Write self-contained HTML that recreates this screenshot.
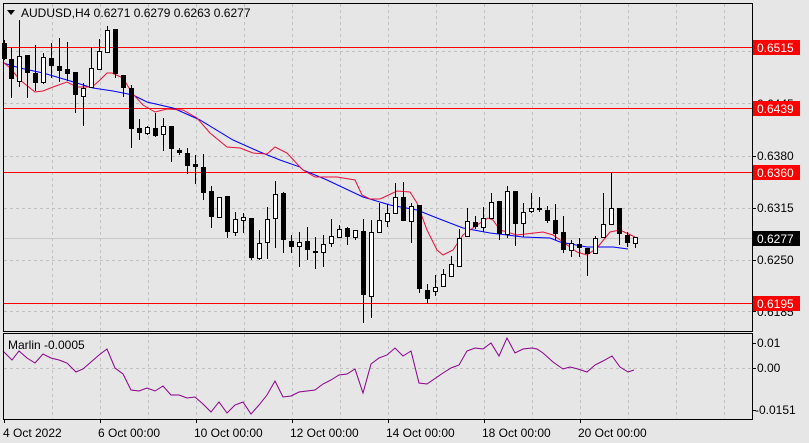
<!DOCTYPE html>
<html><head><meta charset="utf-8"><style>
html,body{margin:0;padding:0;background:#e6e6e6;}
svg{display:block;font-family:"Liberation Sans","DejaVu Sans",sans-serif;}
</style></head><body>
<svg width="809" height="443" viewBox="0 0 809 443" xmlns="http://www.w3.org/2000/svg">
<rect width="809" height="443" fill="#e6e6e6"/>
<g stroke="#c0c0c0" stroke-width="1" stroke-dasharray="3,3" fill="none">
<path d="M52.5 4V331M100.5 4V331M148.5 4V331M196.5 4V331M244.5 4V331M292.5 4V331M340.5 4V331M388.5 4V331M436.5 4V331M484.5 4V331M532.5 4V331M580.5 4V331M628.5 4V331M676.5 4V331M724.5 4V331"/>
<path d="M52.5 334V419M100.5 334V419M148.5 334V419M196.5 334V419M244.5 334V419M292.5 334V419M340.5 334V419M388.5 334V419M436.5 334V419M484.5 334V419M532.5 334V419M580.5 334V419M628.5 334V419M676.5 334V419M724.5 334V419"/>
<path d="M4 51.5H752M4 103.5H752M4 156.5H752M4 208.5H752M4 260.5H752M4 311.5H752M4 368.5H752"/>
</g>
<path d="M4 238.5H752" stroke="#c8c8c8" stroke-width="1"/>
<g stroke="#ff0000" stroke-width="1">
<path d="M4 47.5H752M4 108.5H752M4 172.5H752M4 303.5H752"/>
</g>
<!-- moving averages -->
<polyline fill="none" stroke="#0000ff" stroke-width="1" points="3,63 20,68 43,73 67,80 93,88 113,91 133,95 147,102 173,108 200,120 233,140 260,152 280,160 300,167 303,170 327,180 363,197 390,205 417,210 437,218 463,228 490,233 523,237 550,238 560,242 587,247 613,247 628,249"/>
<polyline fill="none" stroke="#e8103a" stroke-width="1" points="3,62 10,68 20,80 35,92 43,91 53,87 67,82 77,87 92,87 100,80 107,73 112,73 123,78 132,93 143,105 155,112 167,109 183,110 197,118 210,133 227,147 240,148 253,153 267,154 275,147 287,153 300,167 303,170 315,177 337,177 355,180 362,195 370,199 380,199 397,191 410,192 417,203 427,230 437,250 443,255 453,250 463,235 477,225 488,218 493,220 500,230 517,235 543,232 553,235 563,242 577,252 587,255 597,248 610,232 620,230 635,237"/>
<!-- wicks -->
<path stroke="#000" stroke-width="1" fill="none" d="M4.5 40V60M11.5 48V98M19.5 20V87M27.5 55V98M35.5 45V91M43.5 53V84M51.5 43V78M59.5 38V82M67.5 42V81M75.5 72V113M83.5 83V126M91.5 47V88M99.5 39V70M107.5 26V52M115.5 29V78M123.5 75V97M131.5 85V148M139.5 119V140M147.5 126V135M155.5 113V137M163.5 118V151M171.5 126V162M179.5 148V155M187.5 148V174M195.5 155V184M203.5 154V200M211.5 186V228M219.5 197V217M227.5 196V238M235.5 212V236M243.5 213V233M251.5 218V260M259.5 230V260M267.5 207V259M275.5 181V248M283.5 192V253M291.5 235V253M299.5 232V267M307.5 227V260M315.5 237V269M323.5 235V267M331.5 219V247M339.5 225V237M347.5 227V245M355.5 230V240M363.5 219V323M371.5 220V318M379.5 203V232M387.5 204V227M395.5 183V214M403.5 182V221M411.5 203V243M419.5 205V293M427.5 284V303M435.5 275V296M443.5 269V286M451.5 256V276M459.5 229V267M467.5 208V236M475.5 216V229M483.5 207V232M491.5 193V218M499.5 201V240M507.5 186V238M515.5 191V246M523.5 203V237M531.5 193V213M539.5 197V212M547.5 206V223M555.5 204V240M563.5 216V253M571.5 240V257M579.5 238V257M587.5 248V276M595.5 236V253M603.5 193V238M611.5 173V225M619.5 208V245M627.5 232V247M635.5 237V248"/>
<!-- black bodies -->
<g fill="#000">
<rect x="2" y="43" width="5" height="16"/><rect x="9" y="59" width="5" height="20"/><rect x="25" y="55" width="5" height="18"/><rect x="33" y="73" width="5" height="10"/><rect x="49" y="58" width="5" height="8"/><rect x="57" y="66" width="5" height="5"/><rect x="65" y="69" width="5" height="5"/><rect x="73" y="72" width="5" height="23"/><rect x="113" y="29" width="5" height="45"/><rect x="121" y="75" width="5" height="13"/><rect x="129" y="88" width="5" height="41"/><rect x="137" y="128" width="5" height="5"/><rect x="153" y="128" width="5" height="8"/><rect x="169" y="126" width="5" height="23"/><rect x="177" y="150" width="5" height="3"/><rect x="185" y="153" width="5" height="13"/><rect x="193" y="164" width="5" height="3"/><rect x="201" y="167" width="5" height="26"/><rect x="209" y="191" width="5" height="26"/><rect x="225" y="196" width="5" height="36"/><rect x="249" y="218" width="5" height="40"/><rect x="281" y="193" width="5" height="47"/><rect x="289" y="241" width="5" height="6"/><rect x="305" y="241" width="5" height="9"/><rect x="313" y="251" width="5" height="2"/><rect x="345" y="228" width="5" height="9"/><rect x="361" y="231" width="5" height="64"/><rect x="401" y="197" width="5" height="24"/><rect x="417" y="205" width="5" height="84"/><rect x="425" y="290" width="5" height="9"/><rect x="473" y="222" width="5" height="5"/><rect x="497" y="201" width="5" height="33"/><rect x="513" y="191" width="5" height="33"/><rect x="537" y="208" width="5" height="2"/><rect x="545" y="210" width="5" height="11"/><rect x="553" y="220" width="5" height="14"/><rect x="561" y="232" width="5" height="18"/><rect x="577" y="244" width="5" height="4"/><rect x="585" y="248" width="5" height="6"/><rect x="617" y="208" width="5" height="26"/><rect x="625" y="235" width="5" height="8"/>
</g>
<!-- white bodies -->
<g fill="#fff" stroke="#000" stroke-width="1">
<rect x="17.5" y="56.5" width="4" height="25"/><rect x="41.5" y="57.5" width="4" height="25"/><rect x="81.5" y="88.5" width="4" height="8"/><rect x="89.5" y="68.5" width="4" height="19"/><rect x="97.5" y="51.5" width="4" height="18"/><rect x="105.5" y="30.5" width="4" height="22"/><rect x="145.5" y="127.5" width="4" height="6"/><rect x="161.5" y="126.5" width="4" height="8"/><rect x="217.5" y="197.5" width="4" height="20"/><rect x="233.5" y="219.5" width="4" height="13"/><rect x="241.5" y="217.5" width="4" height="3"/><rect x="257.5" y="243.5" width="4" height="15"/><rect x="265.5" y="219.5" width="4" height="23"/><rect x="273.5" y="194.5" width="4" height="24"/><rect x="297.5" y="242.5" width="4" height="4"/><rect x="321.5" y="244.5" width="4" height="8"/><rect x="329.5" y="236.5" width="4" height="7"/><rect x="337.5" y="229.5" width="4" height="8"/><rect x="353.5" y="230.5" width="4" height="7"/><rect x="369.5" y="232.5" width="4" height="64"/><rect x="377.5" y="220.5" width="4" height="12"/><rect x="385.5" y="213.5" width="4" height="8"/><rect x="393.5" y="197.5" width="4" height="16"/><rect x="409.5" y="206.5" width="4" height="15"/><rect x="433.5" y="287.5" width="4" height="4"/><rect x="441.5" y="274.5" width="4" height="12"/><rect x="449.5" y="264.5" width="4" height="12"/><rect x="457.5" y="238.5" width="4" height="28"/><rect x="465.5" y="221.5" width="4" height="15"/><rect x="481.5" y="218.5" width="4" height="9"/><rect x="489.5" y="202.5" width="4" height="16"/><rect x="505.5" y="191.5" width="4" height="43"/><rect x="521.5" y="212.5" width="4" height="11"/><rect x="529.5" y="208.5" width="4" height="3"/><rect x="569.5" y="243.5" width="4" height="7"/><rect x="593.5" y="238.5" width="4" height="15"/><rect x="601.5" y="224.5" width="4" height="13"/><rect x="609.5" y="208.5" width="4" height="16"/><rect x="633.5" y="237.5" width="4" height="6"/>
</g>
<!-- indicator -->
<polyline fill="none" stroke="#8b008b" stroke-width="1" points="3,351 12,360 19,351 27,358 35,363 43,354 51,358 59,360 67,363 76,372 83,369 91,362 99,355 107,349 115,368 123,374 131,390 139,391 147,388 155,391 163,386 171,395 179,395 187,398 195,397 203,404 211,412 219,402 227,413 235,405 243,402 251,414 259,405 267,395 275,381 283,397 291,396 299,392 307,391 315,390 323,384 331,380 339,375 347,374 355,369 363,393 371,364 379,358 387,355 395,348 403,356 411,351 419,383 427,384 443,373 451,368 459,365 467,351 475,348 483,349 491,343 499,356 507,338 515,353 523,349 532,348 537,349 543,353 553,362 563,369 570,367 578,369 587,372 595,365 603,361 612,356 620,367 628,372 634,370"/>
<!-- borders -->
<g stroke="#000" stroke-width="1" fill="none">
<rect x="3.5" y="3.5" width="749" height="328"/>
<rect x="3.5" y="333.5" width="749" height="86"/>
<path d="M752 51.5h4M752 103.5h4M752 156.5h4M752 208.5h4M752 260.5h4M752 311.5h4M752 343.5h4M752 368.5h4M752 410.5h4"/>
<path d="M4.5 419v4M100.5 419v4M196.5 419v4M292.5 419v4M388.5 419v4M484.5 419v4M580.5 419v4"/>
</g>
<!-- title -->
<path d="M7 10h8l-4 5z" fill="#000"/>
<text x="21" y="17" font-size="12" fill="#000">AUDUSD,H4  0.6271 0.6279 0.6263 0.6277</text>
<text x="8" y="349" font-size="12" fill="#000">Marlin -0.0005</text>
<!-- price labels -->
<g font-size="12" fill="#000">
<text x="757" y="108">0.6445</text>
<text x="757" y="160">0.6380</text>
<text x="757" y="212">0.6315</text>
<text x="757" y="264">0.6250</text>
<text x="757" y="316">0.6185</text>
<text x="757" y="347">0.01</text>
<text x="757" y="372">0.00</text>
<text x="755" y="414">-0.0151</text>
</g>
<g font-size="12" fill="#fff">
<rect x="753" y="40" width="47" height="15" fill="#ff0000"/><text x="757" y="52">0.6515</text>
<rect x="753" y="101" width="47" height="15" fill="#ff0000"/><text x="757" y="113">0.6439</text>
<rect x="753" y="165" width="47" height="15" fill="#ff0000"/><text x="757" y="177">0.6360</text>
<rect x="753" y="231" width="47" height="15" fill="#000"/><text x="757" y="243">0.6277</text>
<rect x="753" y="296" width="47" height="15" fill="#ff0000"/><text x="757" y="308">0.6195</text>
</g>
<g font-size="12" fill="#000">
<text x="3" y="437">4 Oct 2022</text>
<text x="98" y="437">6 Oct 00:00</text>
<text x="194" y="437">10 Oct 00:00</text>
<text x="290" y="437">12 Oct 00:00</text>
<text x="386" y="437">14 Oct 00:00</text>
<text x="482" y="437">18 Oct 00:00</text>
<text x="578" y="437">20 Oct 00:00</text>
</g>
</svg>
</body></html>
